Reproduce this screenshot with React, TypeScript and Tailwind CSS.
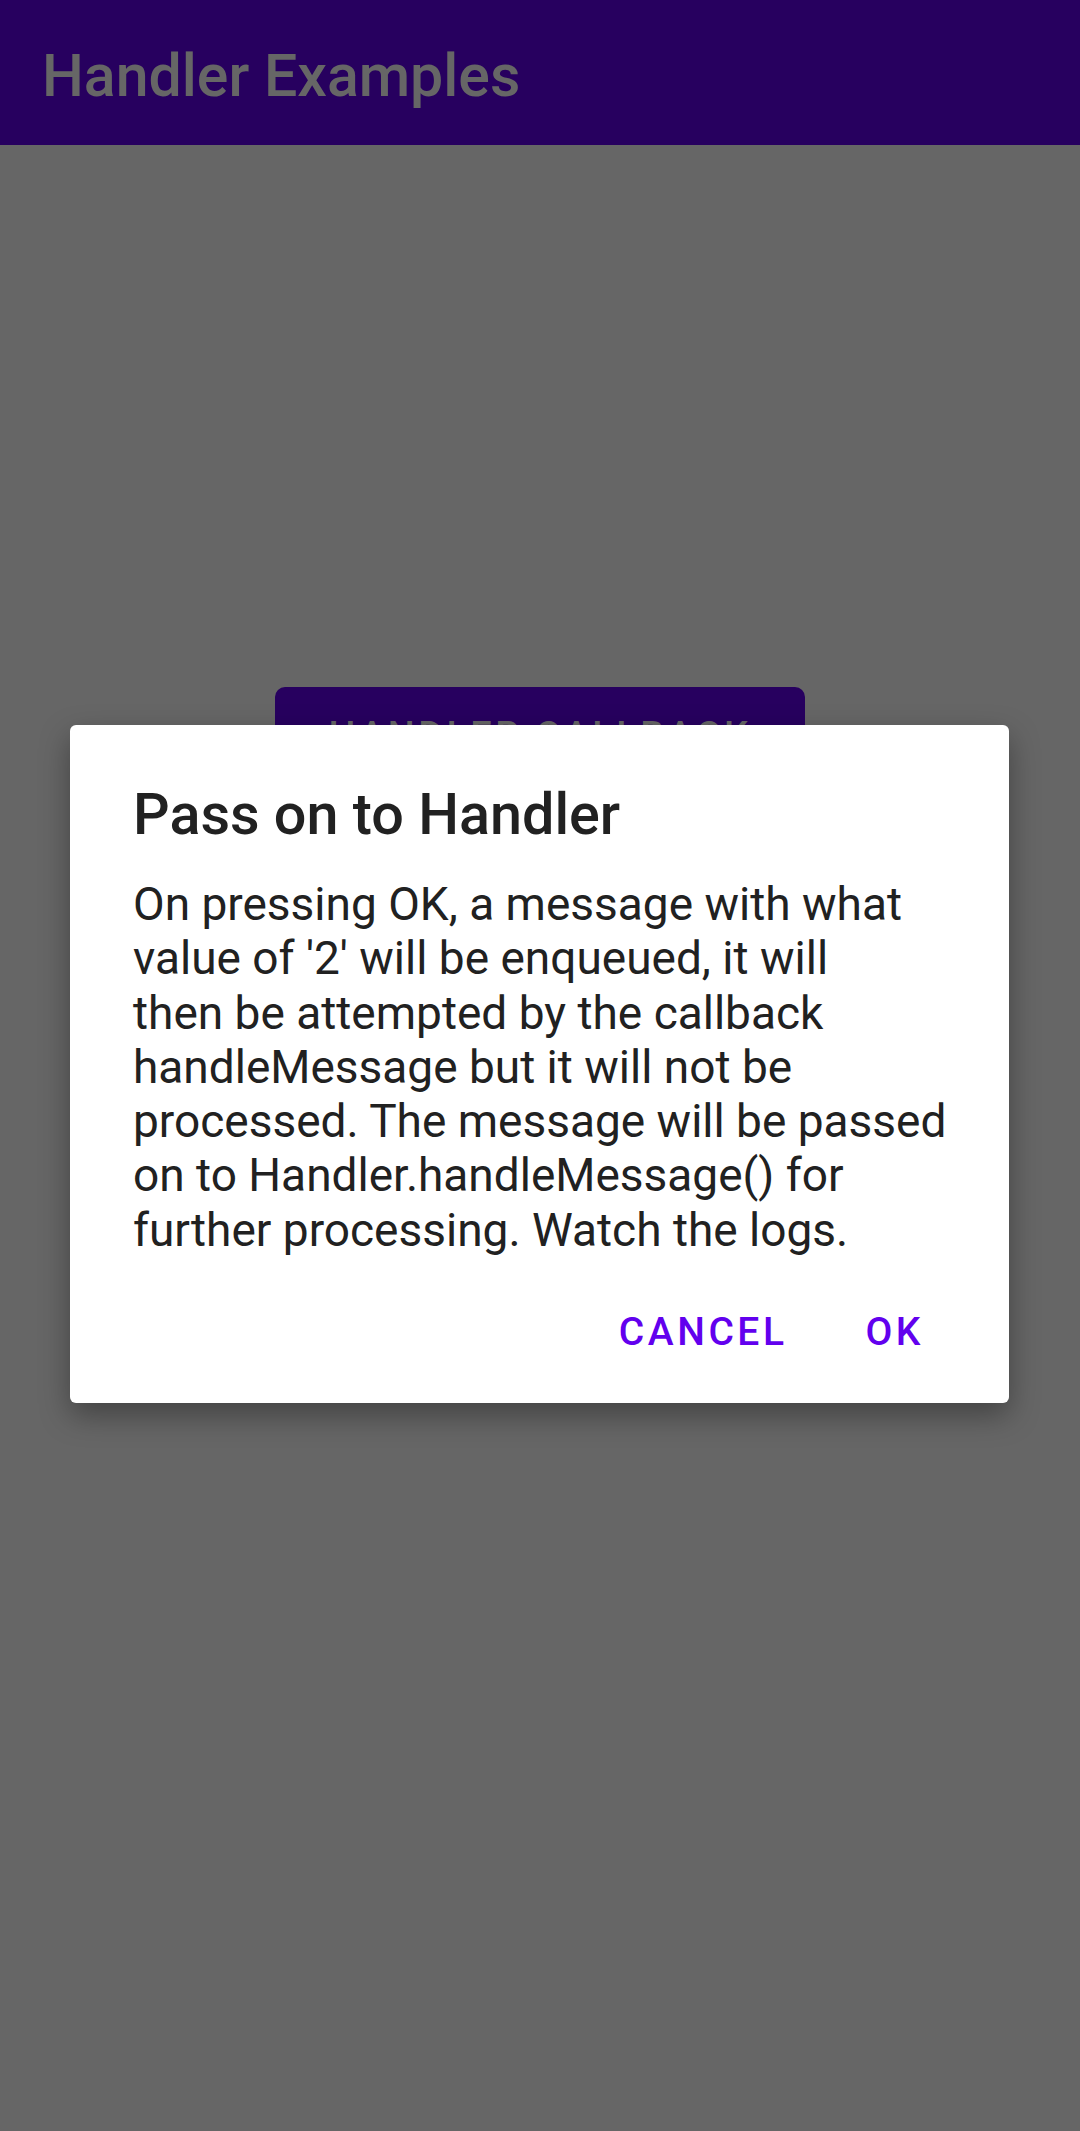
const App = () => {
  return (
    <div
      className="relative min-h-[2131px] w-[1080px] bg-[#666666]"
      style={{ fontFamily: "Roboto, 'Noto Sans', sans-serif" }}
    >
      {/* app bar, dimmed by the dialog scrim */}
      <header className="flex h-[145px] items-center bg-[#27005f] pl-[42px] pt-[5px]">
        <h1 className="text-[59px] font-medium leading-none text-[#666666]">Handler Examples</h1>
      </header>

      <main className="flex justify-center pt-[542px]">
        <button className="flex h-[99px] w-[530px] items-center justify-center rounded-[10px] bg-[#27005f] text-[38px] font-medium tracking-[0.09em] text-[#666666]">
          HANDLER CALLBACK
        </button>
      </main>

      {/* dialog */}
      <div className="absolute left-[70px] top-[725px] flex h-[678px] w-[939px] flex-col rounded-[6px] bg-white shadow-[0_12px_30px_rgba(0,0,0,0.35)]">
        <div className="pl-[63px] pr-[60px] pt-[56px]">
          <h2 className="text-[57.5px] font-medium leading-[68px] text-[#212121]">Pass on to Handler</h2>
          <p className="mt-[28px] text-[46px] leading-[54.3px] text-[#212121]">
            On pressing OK, a message with what value of '2' will be enqueued, it will
            <br />
            then be attempted by the callback handleMessage but it will not be processed. The message will be passed on
            to Handler.handleMessage() for further processing. Watch the logs.
          </p>
        </div>
        <div className="flex justify-end gap-[78px] pr-[85px] pt-[46px]">
          <span className="text-[39px] font-medium tracking-[0.09em] text-[#6200ee]">CANCEL</span>
          <span className="text-[39px] font-medium tracking-[0.09em] text-[#6200ee]">OK</span>
        </div>
      </div>
    </div>
  );
};

export default App;
